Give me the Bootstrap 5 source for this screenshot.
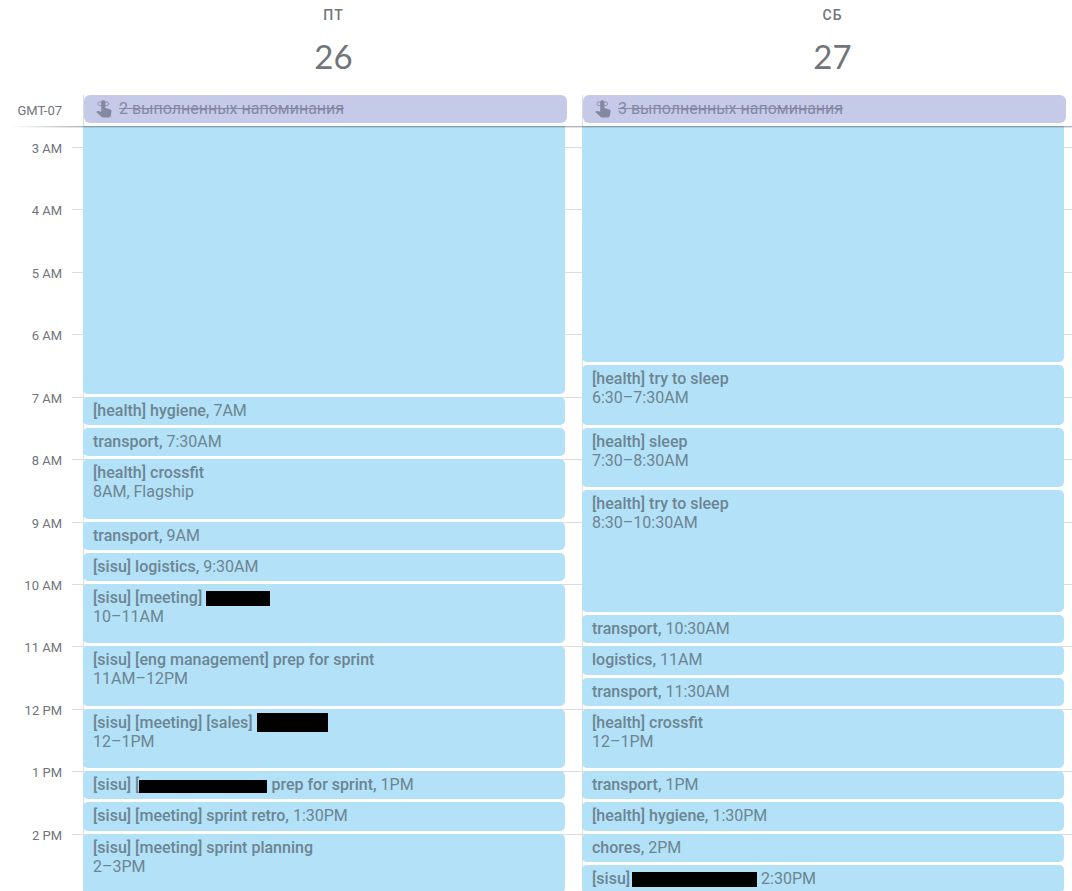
<!DOCTYPE html>
<html lang="ru">
<head>
<meta charset="utf-8">
<meta name="viewport" content="width=device-width, initial-scale=1">
<title>Календарь</title>
<link rel="stylesheet" href="https://cdn.jsdelivr.net/npm/bootstrap@5.3.0/dist/css/bootstrap.min.css">
<style>
  body { font-family: Roboto, "Liberation Sans", sans-serif; color: #70757a; background: #fff; }
  /* the week strip runs on past the right edge of the window */
  .cal-head, .cal-grid { display: grid; grid-template-columns: 72px 11px 1fr 1fr; margin-right: -9px; }
  .cal-head { grid-template-rows: 95px 31px; }
  .day-title { padding-left: 2px; }
  .day-name { font-size: 14px; line-height: 18px; font-weight: 500; letter-spacing: 1px; padding-top: 6px; }
  .day-number { font-family: Lato, Roboto, sans-serif; font-size: 33px; line-height: 40px; margin-top: 12px; }
  .zone { font-size: 13px; line-height: 32px; padding-right: 10px; }
  .all-day { border-left: 1px solid #dadce0; padding-right: 15px; }
  .reminder { height: 28px; border-radius: 6px; background: #c6cae9; color: #8588a1; font-size: 16px; line-height: 28px; padding-left: 12px; }
  .reminder svg { width: 16px; height: 18px; margin-right: 7px; }
  .head-shadow { height: 2px; z-index: 2; left: 10px; right: 0; top: 0; }
  .head-shadow::before, .head-shadow::after { content: ""; display: block; height: 1px; }
  .head-shadow::before { background: linear-gradient(to right, #3c404300, #3c404366 73px); }
  .head-shadow::after { background: linear-gradient(to right, #3c404300, #3c404326 73px); }
  .cal-grid { grid-template-rows: 21px repeat(24, 1fr); height: 770px; }
  .hour { grid-column: 1; font-size: 13px; line-height: 20px; margin-top: -8px; padding-right: 10px; }
  .hour-line { grid-column: 2 / -1; border-top: 1px solid #dadce0; }
  .day-line { grid-row: 1 / -1; border-left: 1px solid #dadce0; }
  .fri { grid-column: 3; }
  .sat { grid-column: 4; }
  .event { background: #b3e1f7; color: #6c8592; border-radius: 5px; margin: 0 17px 3px 0; padding: 4px 10px 0;
    font-size: 16px; line-height: 19px; white-space: nowrap; overflow: hidden; min-height: 0; }
  .event b { font-weight: 500; }
  .redact { display: inline-block; background: #000; height: 15px; vertical-align: -3px; }
  .redact-tall { height: 19px; vertical-align: top; }
  .redact-low { height: 13px; vertical-align: -3px; }
</style>
</head>
<body class="vh-100 d-flex flex-column overflow-hidden">
<header class="cal-head flex-shrink-0">
  <div class="day-title text-center" style="grid-area: 1 / 3"><div class="day-name">ПТ</div><div class="day-number">26</div></div>
  <div class="day-title text-center" style="grid-area: 1 / 4"><div class="day-name">СБ</div><div class="day-number">27</div></div>
  <div class="zone text-end" style="grid-area: 2 / 1">GMT-07</div>
  <div class="all-day" style="grid-area: 2 / 3"><div class="reminder d-flex align-items-center">
    <svg viewBox="0 0 16 18" fill="currentColor" aria-hidden="true"><path d="M5.2 2.2C5.2.9 6.2.3 7.3.3s2.1.6 2.1 1.9V8l5 1.6c.9.3 1.2.8 1.1 1.7l-.6 4.3c-.2 1.2-.9 1.9-2 1.9H7c-.7 0-1.2-.2-1.7-.7L.3 12.1l.8-.8c.4-.4.8-.5 1.4-.3l2.7.8z"/><path d="M7.3 3.8C4.6.8 2 2 2 3.8s2.6 3 5.3 0c2.7-3 5.3-1.8 5.3 0s-2.6 3-5.3 0z" fill="none" stroke="currentColor" stroke-width="1"/></svg><s>2 выполненных напоминания</s></div></div>
  <div class="all-day" style="grid-area: 2 / 4"><div class="reminder d-flex align-items-center">
    <svg viewBox="0 0 16 18" fill="currentColor" aria-hidden="true"><path d="M5.2 2.2C5.2.9 6.2.3 7.3.3s2.1.6 2.1 1.9V8l5 1.6c.9.3 1.2.8 1.1 1.7l-.6 4.3c-.2 1.2-.9 1.9-2 1.9H7c-.7 0-1.2-.2-1.7-.7L.3 12.1l.8-.8c.4-.4.8-.5 1.4-.3l2.7.8z"/><path d="M7.3 3.8C4.6.8 2 2 2 3.8s2.6 3 5.3 0c2.7-3 5.3-1.8 5.3 0s-2.6 3-5.3 0z" fill="none" stroke="currentColor" stroke-width="1"/></svg><s>3 выполненных напоминания</s></div></div>
</header>
<main class="position-relative flex-grow-1 overflow-hidden">
  <div class="head-shadow position-absolute"></div>
  <div class="cal-grid">
    <div class="hour text-end" style="grid-row: 2">3 AM</div><div class="hour-line" style="grid-row: 2"></div>
    <div class="hour text-end" style="grid-row: 4">4 AM</div><div class="hour-line" style="grid-row: 4"></div>
    <div class="hour text-end" style="grid-row: 6">5 AM</div><div class="hour-line" style="grid-row: 6"></div>
    <div class="hour text-end" style="grid-row: 8">6 AM</div><div class="hour-line" style="grid-row: 8"></div>
    <div class="hour text-end" style="grid-row: 10">7 AM</div><div class="hour-line" style="grid-row: 10"></div>
    <div class="hour text-end" style="grid-row: 12">8 AM</div><div class="hour-line" style="grid-row: 12"></div>
    <div class="hour text-end" style="grid-row: 14">9 AM</div><div class="hour-line" style="grid-row: 14"></div>
    <div class="hour text-end" style="grid-row: 16">10 AM</div><div class="hour-line" style="grid-row: 16"></div>
    <div class="hour text-end" style="grid-row: 18">11 AM</div><div class="hour-line" style="grid-row: 18"></div>
    <div class="hour text-end" style="grid-row: 20">12 PM</div><div class="hour-line" style="grid-row: 20"></div>
    <div class="hour text-end" style="grid-row: 22">1 PM</div><div class="hour-line" style="grid-row: 22"></div>
    <div class="hour text-end" style="grid-row: 24">2 PM</div><div class="hour-line" style="grid-row: 24"></div>
    <div class="day-line fri"></div>
    <div class="day-line sat"></div>

    <div class="event fri rounded-top-0" style="grid-row: 1 / 10"></div>
    <div class="event fri" style="grid-row: 10"><b>[health] hygiene,</b> 7AM</div>
    <div class="event fri" style="grid-row: 11"><b>transport,</b> 7:30AM</div>
    <div class="event fri" style="grid-row: 12 / span 2"><b>[health] crossfit</b><br>8AM, Flagship</div>
    <div class="event fri" style="grid-row: 14"><b>transport,</b> 9AM</div>
    <div class="event fri" style="grid-row: 15"><b>[sisu] logistics,</b> 9:30AM</div>
    <div class="event fri" style="grid-row: 16 / span 2"><b>[sisu] [meeting]</b> <span class="redact" style="width: 64px"></span><br>10–11AM</div>
    <div class="event fri" style="grid-row: 18 / span 2"><b>[sisu] [eng management] prep for sprint</b><br>11AM–12PM</div>
    <div class="event fri" style="grid-row: 20 / span 2"><b>[sisu] [meeting] [sales]</b> <span class="redact redact-tall" style="width: 71px"></span><br>12–1PM</div>
    <div class="event fri" style="grid-row: 22"><b>[sisu] [<span class="redact redact-low" style="width: 128px"></span> prep for sprint,</b> 1PM</div>
    <div class="event fri" style="grid-row: 23"><b>[sisu] [meeting] sprint retro,</b> 1:30PM</div>
    <div class="event fri" style="grid-row: 24 / span 2"><b>[sisu] [meeting] sprint planning</b><br>2–3PM</div>

    <div class="event sat rounded-top-0" style="grid-row: 1 / 9"></div>
    <div class="event sat" style="grid-row: 9 / span 2"><b>[health] try to sleep</b><br>6:30–7:30AM</div>
    <div class="event sat" style="grid-row: 11 / span 2"><b>[health] sleep</b><br>7:30–8:30AM</div>
    <div class="event sat" style="grid-row: 13 / span 4"><b>[health] try to sleep</b><br>8:30–10:30AM</div>
    <div class="event sat" style="grid-row: 17"><b>transport,</b> 10:30AM</div>
    <div class="event sat" style="grid-row: 18"><b>logistics,</b> 11AM</div>
    <div class="event sat" style="grid-row: 19"><b>transport,</b> 11:30AM</div>
    <div class="event sat" style="grid-row: 20 / span 2"><b>[health] crossfit</b><br>12–1PM</div>
    <div class="event sat" style="grid-row: 22"><b>transport,</b> 1PM</div>
    <div class="event sat" style="grid-row: 23"><b>[health] hygiene,</b> 1:30PM</div>
    <div class="event sat" style="grid-row: 24"><b>chores,</b> 2PM</div>
    <div class="event sat" style="grid-row: 25"><b>[sisu]</b><span class="redact" style="width: 125px; margin-left: 2px"></span> 2:30PM</div>
  </div>
</main>
<script src="https://cdn.jsdelivr.net/npm/bootstrap@5.3.0/dist/js/bootstrap.bundle.min.js"></script>
</body>
</html>
